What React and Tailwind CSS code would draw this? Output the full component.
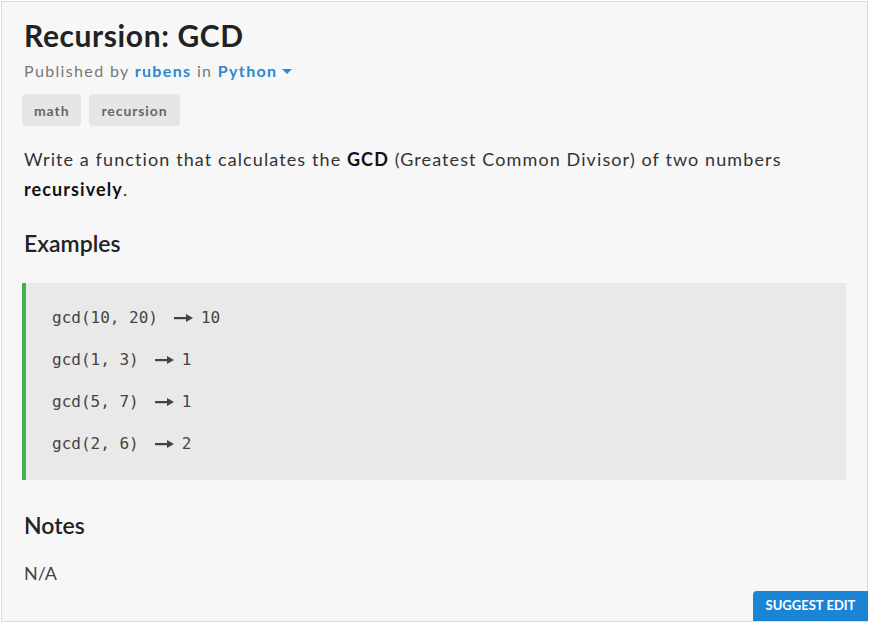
import React from 'react'

const examples = [
  ['gcd(10, 20)', '10'],
  ['gcd(1, 3)', '1'],
  ['gcd(5, 7)', '1'],
  ['gcd(2, 6)', '2'],
]

const Arrow = () => (
  <svg width="19" height="10" viewBox="0 0 19 10" className="ml-[16px] mr-[8px]">
    <rect x="0" y="4" width="13" height="2.2" fill="#444" />
    <polygon points="12,1 19,5 12,9" fill="#444" />
  </svg>
)

const App = () => {
  return (
    <div className="bg-white w-[876px] h-[629px] pt-px pl-px font-['Lato',sans-serif]">
      <div className="relative w-[867px] h-[621px] border border-[#dcdcdc] bg-[#f7f7f7] pl-5 pr-[21px]">
        <h1 className="mt-[15px] text-[30px] leading-[36px] font-bold tracking-[0.6px] text-[#222] pl-[2px]">
          Recursion: GCD
        </h1>

        <div className="mt-[6px] text-[16px] leading-[24px] tracking-[1.35px] text-[#777] pl-[2px]">
          Published by <span className="font-bold text-[#2d88cd]">rubens</span> in{' '}
          <span className="font-bold text-[#2d88cd]">Python</span>
          <span className="inline-block ml-[5px] align-middle w-0 h-0 border-l-[5px] border-r-[5px] border-t-[5px] border-l-transparent border-r-transparent border-t-[#2d88cd] mb-[3px]"></span>
        </div>

        <div className="mt-[11px] flex gap-2">
          <span className="h-[32px] px-3 flex items-center rounded bg-[#e6e6e6] text-[14px] font-bold tracking-[0.9px] text-[#666]">
            math
          </span>
          <span className="h-[32px] px-3 flex items-center rounded bg-[#e6e6e6] text-[14px] font-bold tracking-[0.9px] text-[#666]">
            recursion
          </span>
        </div>

        <p className="mt-[18px] text-[18px] leading-[30px] tracking-[1.1px] text-[#333] pl-[2px]">
          Write a function that calculates the <b className="font-bold text-[#111]">GCD</b> (Greatest
          Common Divisor) of two numbers <b className="font-bold text-[#111]">recursively</b>.
        </p>

        <h2 className="mt-[25px] text-[23px] leading-[28px] font-semibold text-[#222] pl-[2px]">
          Examples
        </h2>

        <div className="mt-[26px] border-l-4 border-[#3fb34f] bg-[#e9e9e9] pl-[26px] pt-[14px] pb-[15px] font-['DejaVu_Sans_Mono',monospace] text-[16px] text-[#444]">
          {examples.map(([call, result]) => (
            <div key={call} className="h-[42px] flex items-center whitespace-pre">
              <span>{call}</span>
              <Arrow />
              <span>{result}</span>
            </div>
          ))}
        </div>

        <h2 className="mt-[31px] text-[23px] leading-[28px] font-semibold text-[#222] pl-[2px]">
          Notes
        </h2>

        <p className="mt-[19px] text-[18px] leading-[30px] text-[#444] pl-[2px]">N/A</p>

        <button className="absolute right-[-1px] bottom-[0px] w-[115px] h-[30px] rounded-tl bg-[#1b84d4] text-white text-[13px] font-bold">
          SUGGEST EDIT
        </button>
      </div>
    </div>
  )
}

export default App
